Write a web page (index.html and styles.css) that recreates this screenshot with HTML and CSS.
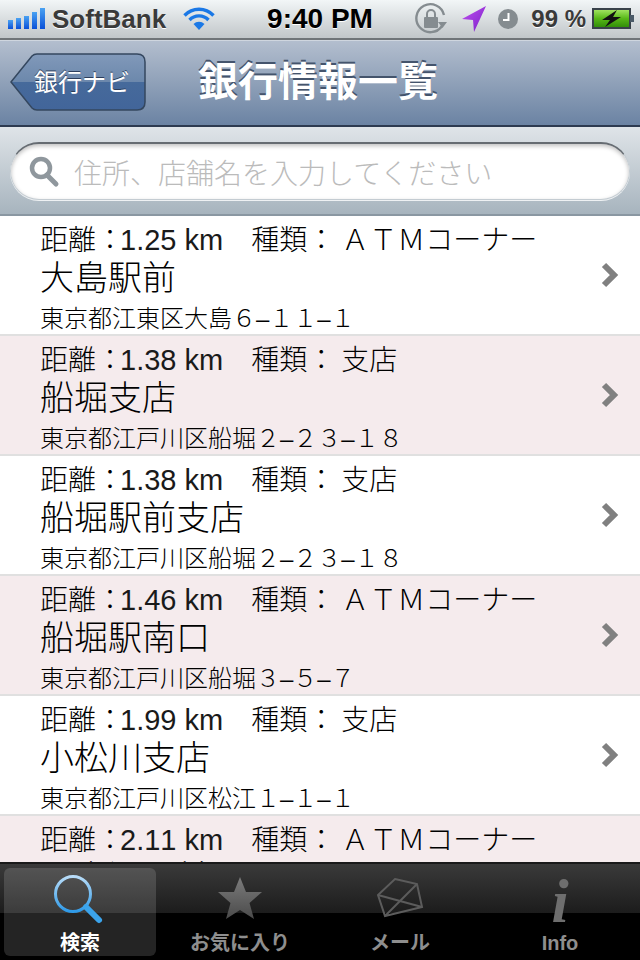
FILE: index.html
```html
<!DOCTYPE html>
<html lang="ja">
<head>
  <meta charset="UTF-8">
  <title>銀行情報一覧</title>
  <link rel="stylesheet" href="styles.css">
</head>
<body>
  <div class="phone">
    <!-- status bar -->
    <div class="status-bar">
      <div class="status-left">
        <svg class="signal" width="38" height="22" viewBox="0 0 38 22">
          <defs>
            <linearGradient id="barBlue" x1="0" y1="0" x2="0" y2="1">
              <stop offset="0" stop-color="#4aa2f2"/>
              <stop offset="1" stop-color="#0a50d8"/>
            </linearGradient>
          </defs>
          <rect x="0" y="12" width="5" height="9" fill="url(#barBlue)"/>
          <rect x="8" y="10" width="5" height="11" fill="url(#barBlue)"/>
          <rect x="16" y="8" width="5" height="13" fill="url(#barBlue)"/>
          <rect x="24" y="4" width="5" height="17" fill="url(#barBlue)"/>
          <rect x="32" y="0" width="5" height="21" fill="url(#barBlue)"/>
        </svg>
        <span class="carrier">SoftBank</span>
        <svg class="wifi" width="32" height="24" viewBox="0 0 32 24">
          <g fill="none" stroke="#1a78e6" stroke-width="3.4">
            <path d="M1.5 8.5 A20 20 0 0 1 30.5 8.5"/>
            <path d="M6.5 13 A13 13 0 0 1 25.5 13"/>
          </g>
          <path d="M10.5 17 A8 8 0 0 1 21.5 17 L16 23 Z" fill="#1a78e6"/>
        </svg>
      </div>
      <span class="clock">9:40 PM</span>
      <div class="status-right">
        <svg class="rotation-lock" width="34" height="34" viewBox="0 0 34 34">
          <path d="M28 24 A14 14 0 1 1 30 13" fill="none" stroke="#858c90" stroke-width="2.4"/>
          <path d="M24 20 H33 L28.500 26 Z" fill="#858c90"/>
          <rect x="10" y="15" width="14" height="11" rx="1" fill="#858c90"/>
          <path d="M13 15 V12 A4 4 0 0 1 21 12 V15" fill="none" stroke="#858c90" stroke-width="2"/>
        </svg>
        <svg width="26" height="28" viewBox="0 0 26 28">
          <defs>
            <linearGradient id="arrowPurple" x1="0" y1="0" x2="1" y2="1">
              <stop offset="0" stop-color="#c050f0"/>
              <stop offset="1" stop-color="#7a20c8"/>
            </linearGradient>
          </defs>
          <path d="M1 14 L25 1 L13 27 L12 15 Z" fill="url(#arrowPurple)"/>
        </svg>
        <svg width="22" height="22" viewBox="0 0 22 22">
          <circle cx="11" cy="11" r="10" fill="#858c90"/>
          <path d="M11.500 5 V12 H6" fill="none" stroke="#fff" stroke-width="2"/>
        </svg>
        <span class="battery-text">99 %</span>
        <svg class="battery" width="43" height="24" viewBox="0 0 43 24">
          <defs>
            <linearGradient id="battGreen" x1="0" y1="0" x2="0" y2="1">
              <stop offset="0" stop-color="#a8e868"/>
              <stop offset="0.5" stop-color="#58b818"/>
              <stop offset="1" stop-color="#2e8a08"/>
            </linearGradient>
          </defs>
          <rect x="1" y="2" width="37" height="19" fill="url(#battGreen)" stroke="#39424a" stroke-width="2"/>
          <rect x="38" y="8" width="4" height="7" fill="#4a5a68"/>
          <path d="M25 3 L10 13 H18 L13 20 L29 10 H21 Z" fill="#111"/>
        </svg>
      </div>
    </div>

    <!-- nav bar -->
    <div class="nav-bar">
      <a class="back-btn">
        <svg class="back-shape" width="136" height="58" viewBox="0 0 136 58">
          <defs>
            <linearGradient id="backGloss" x1="0" y1="0" x2="0" y2="1">
              <stop offset="0" stop-color="#8199ba"/>
              <stop offset="0.5" stop-color="#6c88ac"/>
              <stop offset="0.5" stop-color="#466a9b"/>
              <stop offset="1" stop-color="#42659a"/>
            </linearGradient>
          </defs>
          <path d="M1 29 L22 3 Q24 1 27 1 H127 Q135 1 135 9 V49 Q135 57 127 57 H27 Q24 57 22 55 Z" fill="url(#backGloss)" stroke="#34475f" stroke-width="1.500"/>
        </svg>
        <span class="back-label">銀行ナビ</span>
      </a>
      <h1 class="nav-title">銀行情報一覧</h1>
    </div>

    <!-- search -->
    <div class="search-bar">
      <div class="search-field">
        <svg width="32" height="34" viewBox="0 0 32 34">
          <circle cx="13" cy="13" r="9" fill="none" stroke="#8f979d" stroke-width="4.500"/>
          <path d="M19 20 L28 29" stroke="#8f979d" stroke-width="5" stroke-linecap="round"/>
        </svg>
        <span class="placeholder">住所、店舗名を入力してください</span>
      </div>
    </div>

    <!-- list -->
    <div class="bank-list">
      <div class="bank-row">
        <div class="bank-info">
          <div class="bank-meta">距離：<span class="dist">1.25 km</span>　種類：<span class="kind">ＡＴＭコーナー</span></div>
          <div class="bank-name">大島駅前</div>
          <div class="bank-addr">東京都江東区大島６–１１–１</div>
        </div>
        <svg class="chevron" width="18" height="26" viewBox="0 0 18 26"><path d="M3 3 L13 13 L3 23" fill="none" stroke="#808080" stroke-width="6"/></svg>
      </div>
      <div class="bank-row alt">
        <div class="bank-info">
          <div class="bank-meta">距離：<span class="dist">1.38 km</span>　種類：<span class="kind">支店</span></div>
          <div class="bank-name">船堀支店</div>
          <div class="bank-addr">東京都江戸川区船堀２–２３–１８</div>
        </div>
        <svg class="chevron" width="18" height="26" viewBox="0 0 18 26"><path d="M3 3 L13 13 L3 23" fill="none" stroke="#808080" stroke-width="6"/></svg>
      </div>
      <div class="bank-row">
        <div class="bank-info">
          <div class="bank-meta">距離：<span class="dist">1.38 km</span>　種類：<span class="kind">支店</span></div>
          <div class="bank-name">船堀駅前支店</div>
          <div class="bank-addr">東京都江戸川区船堀２–２３–１８</div>
        </div>
        <svg class="chevron" width="18" height="26" viewBox="0 0 18 26"><path d="M3 3 L13 13 L3 23" fill="none" stroke="#808080" stroke-width="6"/></svg>
      </div>
      <div class="bank-row alt">
        <div class="bank-info">
          <div class="bank-meta">距離：<span class="dist">1.46 km</span>　種類：<span class="kind">ＡＴＭコーナー</span></div>
          <div class="bank-name">船堀駅南口</div>
          <div class="bank-addr">東京都江戸川区船堀３–５–７</div>
        </div>
        <svg class="chevron" width="18" height="26" viewBox="0 0 18 26"><path d="M3 3 L13 13 L3 23" fill="none" stroke="#808080" stroke-width="6"/></svg>
      </div>
      <div class="bank-row">
        <div class="bank-info">
          <div class="bank-meta">距離：<span class="dist">1.99 km</span>　種類：<span class="kind">支店</span></div>
          <div class="bank-name">小松川支店</div>
          <div class="bank-addr">東京都江戸川区松江１–１–１</div>
        </div>
        <svg class="chevron" width="18" height="26" viewBox="0 0 18 26"><path d="M3 3 L13 13 L3 23" fill="none" stroke="#808080" stroke-width="6"/></svg>
      </div>
      <div class="bank-row alt">
        <div class="bank-info">
          <div class="bank-meta">距離：<span class="dist">2.11 km</span>　種類：<span class="kind">ＡＴＭコーナー</span></div>
          <div class="bank-name">一之江駅前</div>
        </div>
      </div>
    </div>

    <!-- tab bar -->
    <nav class="tab-bar">
      <a class="tab active">
        <svg class="tab-icon" width="60" height="52" viewBox="0 0 60 52">
          <defs>
            <linearGradient id="lensBlue" x1="0" y1="0" x2="0" y2="1">
              <stop offset="0" stop-color="#b8dcf8"/>
              <stop offset="1" stop-color="#2f9ae8"/>
            </linearGradient>
          </defs>
          <circle cx="23" cy="20" r="17.500" fill="none" stroke="url(#lensBlue)" stroke-width="3"/>
          <path d="M36 33 L49 46" stroke="#3ba4ec" stroke-width="6" stroke-linecap="round"/>
        </svg>
        <span>検索</span>
      </a>
      <a class="tab">
        <svg class="tab-icon" width="60" height="52" viewBox="0 0 60 52">
          <defs>
            <linearGradient id="iconGray" x1="0" y1="0" x2="0" y2="1">
              <stop offset="0" stop-color="#7c7c7c"/>
              <stop offset="1" stop-color="#4a4a4a"/>
            </linearGradient>
          </defs>
          <path d="M30 3 L36 18 L52 18 L39.500 29 L44 45 L30 36 L16 45 L20.500 29 L8 18 L24 18 Z" fill="url(#iconGray)"/>
        </svg>
        <span>お気に入り</span>
      </a>
      <a class="tab">
        <svg class="tab-icon" width="60" height="52" viewBox="0 0 60 52">
          <g fill="none" stroke="#5c5c5c" stroke-width="2">
            <path d="M25 5 L47 10 L52 33 L15 42 L8 21 Z"/>
            <path d="M8 21 L52 33"/>
            <path d="M47 10 L15 42"/>
          </g>
        </svg>
        <span>メール</span>
      </a>
      <a class="tab">
        <span class="info-glyph">i</span>
        <span>Info</span>
      </a>
    </nav>
  </div>
</body>
</html>
```

FILE: styles.css
```css
* {
  box-sizing: border-box;
}
body {
  margin: 0;
  background: #000;
  font-family: "Liberation Sans", "Noto Sans CJK JP", sans-serif;
}
.phone {
  width: 640px;
  height: 960px;
  display: flex;
  flex-direction: column;
  overflow: hidden;
}

/* status bar */
.status-bar {
  height: 40px;
  flex: none;
  display: grid;
  grid-template-columns: 1fr auto 1fr;
  align-items: center;
  background: linear-gradient(#f2f6f7, #c1c6c9);
  border-bottom: 2px solid #6f7478;
  color: #3a3a3a;
}
.status-left {
  display: flex;
  align-items: center;
  padding-left: 8px;
}
.carrier {
  font-size: 26px;
  font-weight: bold;
  margin-left: 6px;
  text-shadow: 0 1px 0 #fff;
}
.wifi {
  margin-left: 17px;
}
.clock {
  font-size: 28px;
  font-weight: bold;
  color: #000;
  text-shadow: 0 1px 0 #fff;
}
.status-right {
  display: flex;
  align-items: center;
  justify-content: flex-end;
  gap: 10px;
  padding-right: 5px;
}
.rotation-lock {
  margin-right: 3px;
}
.battery-text {
  font-size: 24px;
  font-weight: bold;
  margin-left: 2px;
  margin-right: -4px;
  text-shadow: 0 1px 0 #fff;
}

/* nav bar */
.nav-bar {
  height: 87px;
  flex: none;
  display: flex;
  align-items: center;
  padding-left: 10px;
  background: linear-gradient(#b3bece, #6b83a3);
  border-top: 1px solid #cfd6df;
  border-bottom: 2px solid #2d3a50;
}
.back-btn {
  position: relative;
  width: 136px;
  height: 58px;
  display: flex;
  align-items: center;
  justify-content: flex-end;
  padding-right: 16px;
  margin-top: -2px;
}
.back-shape {
  position: absolute;
  left: 0;
  top: 0;
}
.back-label {
  position: relative;
  font-size: 24px;
  color: #fff;
  text-shadow: 0 -1px 0 #2c3e5c;
  margin-top: -3px;
}
.nav-title {
  margin: -8px 0 0 52px;
  font-size: 40px;
  font-weight: bold;
  color: #fff;
  text-shadow: 0 -2px 0 #44546c;
}

/* search */
.search-bar {
  height: 89px;
  flex: none;
  padding: 15px 10px 0;
  background: linear-gradient(#dfe4e8, #a7b4be);
  border-bottom: 2px solid #8a97a2;
}
.search-field {
  height: 58px;
  display: flex;
  align-items: center;
  padding-left: 17px;
  gap: 14px;
  background: #fff;
  border-radius: 29px;
  border: 1px solid #c4ccd2;
  border-top: 2px solid #666c72;
  box-shadow: inset 0 2px 4px rgba(0, 0, 0, .25), 0 1px 0 #eef1f3;
}
.placeholder {
  font-size: 28px;
  font-weight: 300;
  color: #bbb;
}

/* list */
.bank-list {
  flex: 1;
  min-height: 0;
  overflow: hidden;
  background: #fff;
}
.bank-row {
  height: 120px;
  display: flex;
  align-items: center;
  justify-content: space-between;
  padding: 0 21px 0 40px;
  border-bottom: 2px solid #e0e0e0;
  color: #000;
}
.bank-row.alt {
  background: #f5ebed;
}
.bank-info {
  align-self: flex-start;
  font-weight: 300;
}
.bank-meta {
  font-size: 28px;
  line-height: 42px;
  padding-top: 3px;
  white-space: nowrap;
}
.dist {
  font-size: 29px;
  font-weight: 400;
  font-kerning: none;
  color: #1a1a1a;
  margin-left: -4px;
}
.kind {
  margin-left: 6px;
}
.bank-name {
  font-size: 34px;
  line-height: 32px;
}
.bank-addr {
  font-size: 24px;
  line-height: 30px;
  padding-top: 10px;
  white-space: nowrap;
}
.chevron {
  flex: none;
}

/* tab bar */
.tab-bar {
  height: 98px;
  flex: none;
  display: flex;
  background: linear-gradient(#3a3a3a 0, #1c1c1c 49px, #000 49px);
  border-top: 2px solid #1a1a1a;
}
.tab {
  flex: 1;
  margin: 4px;
  display: flex;
  flex-direction: column;
  align-items: center;
  justify-content: flex-end;
  font-size: 20px;
  line-height: 26px;
  font-weight: bold;
  color: #8e8e8e;
  border-radius: 6px;
}
.tab.active {
  color: #fff;
  background: rgba(255, 255, 255, .14);
}
.tab-icon {
  margin-bottom: 4px;
}
.info-glyph {
  height: 56px;
  font-family: "Liberation Serif", serif;
  font-style: italic;
  font-size: 62px;
  line-height: 54px;
  color: #6e6e6e;
}
```
